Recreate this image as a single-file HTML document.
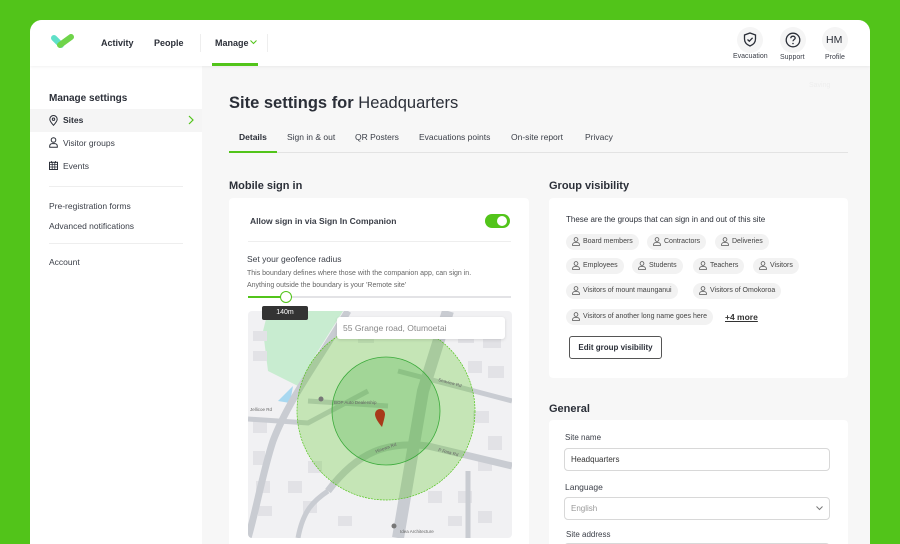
<!DOCTYPE html>
<html style="width:900px;height:544px;overflow:hidden"><head><meta charset="utf-8"><style>
*{box-sizing:border-box;margin:0;padding:0}
body{width:900px;height:544px;overflow:hidden;background:#52c41a;font-family:"Liberation Sans",sans-serif;color:#2b2f38;position:relative}
.a{position:absolute}
.card{left:30px;top:20px;width:840px;height:524px;background:#f7f7f7;border-radius:12px 12px 0 0;overflow:hidden}
.hdr{left:0;top:0;width:840px;height:46px;background:#fff;box-shadow:0 1px 3px rgba(0,0,0,.06);z-index:2}
.side{left:0;top:46px;width:172px;height:500px;background:#fff}
.nav{font-size:9px;font-weight:bold;color:#2b2f38}
.sm{font-size:8.5px;color:#3a3e47}
.panel{background:#fff;border-radius:4px}
.chip{position:absolute;height:16px;border-radius:8px;background:#f2f2f2;font-size:7px;color:#444;line-height:16px;padding-left:17px;padding-right:6px;white-space:nowrap}
.chip svg{position:absolute;left:6px;top:3px}
.inp{position:absolute;height:23px;border:1px solid #d8d8d8;border-radius:4px;background:#fff;font-size:8px;line-height:21px;padding-left:6px;color:#333}
</style></head><body>
<div class="a card">
 <div class="a hdr">
  <svg class="a" style="left:21px;top:14px" width="24" height="16" viewBox="0 0 24 16"><path d="M3 4 L10 11" stroke="#5fe0c8" stroke-width="6" stroke-linecap="round"/><path d="M9 11 L20 3" stroke="#6fd44a" stroke-width="6" stroke-linecap="round"/></svg>
  <div class="a nav" style="left:71px;top:18px">Activity</div>
  <div class="a nav" style="left:124px;top:18px">People</div>
  <div class="a" style="left:170px;top:14px;width:1px;height:18px;background:#eee"></div>
  <div class="a nav" style="left:185px;top:18px">Manage</div>
  <svg class="a" style="left:220px;top:20px" width="7" height="5"><path d="M0.5 0.5 L3.5 3.5 L6.5 0.5" stroke="#52c41a" fill="none"/></svg>
  <div class="a" style="left:237px;top:14px;width:1px;height:18px;background:#eee"></div>
  <div class="a" style="left:182px;top:43px;width:46px;height:3px;background:#52c41a"></div>
  <div class="a" style="left:707px;top:7px;width:26px;height:26px;border-radius:13px;background:#f5f5f5"></div>
  <svg class="a" style="left:713px;top:12px" width="14" height="15" viewBox="0 0 14 15"><path d="M7 1 L12.5 3 V7 C12.5 10.5 10 12.8 7 14 C4 12.8 1.5 10.5 1.5 7 V3 Z" fill="none" stroke="#2b2f38" stroke-width="1.3"/><path d="M4.5 7.5 L6.3 9.2 L9.6 5.8" fill="none" stroke="#2b2f38" stroke-width="1.3"/></svg>
  <div class="a" style="left:703px;top:33px;font-size:7px;color:#3a3e47">Evacuation</div>
  <div class="a" style="left:750px;top:7px;width:26px;height:26px;border-radius:13px;background:#f5f5f5"></div>
  <svg class="a" style="left:755px;top:12px" width="16" height="16" viewBox="0 0 16 16"><circle cx="8" cy="8" r="6.8" fill="none" stroke="#2b2f38" stroke-width="1.3"/><path d="M5.8 6.3 C5.8 4.9 6.8 4.2 8 4.2 C9.3 4.2 10.2 5 10.2 6.1 C10.2 7.5 8 7.6 8 9.3" fill="none" stroke="#2b2f38" stroke-width="1.3"/><circle cx="8" cy="11.5" r=".8" fill="#2b2f38"/></svg>
  <div class="a" style="left:750px;top:34px;font-size:7px;color:#3a3e47">Support</div>
  <div class="a" style="left:792px;top:7px;width:26px;height:26px;border-radius:13px;background:#f5f5f5"></div>
  <div class="a" style="left:796px;top:14px;font-size:10.5px;color:#2b2f38">HM</div>
  <div class="a" style="left:795px;top:34px;font-size:7px;color:#3a3e47">Profile</div>
 </div>
 <div class="a side">
  <div class="a" style="left:19px;top:27px;font-size:10px;font-weight:bold;color:#2b2f38">Manage settings</div>
  <div class="a" style="left:0;top:43px;width:172px;height:23px;background:#f5f5f5"></div>
  <svg class="a" style="left:19px;top:49px" width="9" height="11" viewBox="0 0 9 11"><path d="M4.5 10.3 C2 7.5 0.8 5.8 0.8 4.2 A3.7 3.7 0 0 1 8.2 4.2 C8.2 5.8 7 7.5 4.5 10.3Z" fill="none" stroke="#2b2f38"/><circle cx="4.5" cy="4.2" r="1.2" fill="none" stroke="#2b2f38"/></svg>
  <div class="a" style="left:33px;top:49px;font-size:8.5px;font-weight:bold">Sites</div>
  <svg class="a" style="left:158px;top:49px" width="6" height="10"><path d="M1 1 L5 5 L1 9" stroke="#52c41a" fill="none" stroke-width="1.2"/></svg>
  <svg class="a" style="left:19px;top:71px" width="9" height="11" viewBox="0 0 9 11"><circle cx="4.5" cy="3" r="2.3" fill="none" stroke="#2b2f38"/><path d="M.7 10.3 V9 A2.5 2.5 0 0 1 3.2 6.6 H5.8 A2.5 2.5 0 0 1 8.3 9 V10.3Z" fill="none" stroke="#2b2f38"/></svg>
  <div class="a sm" style="left:33px;top:72px">Visitor groups</div>
  <svg class="a" style="left:19px;top:95px" width="9" height="9" viewBox="0 0 9 9"><rect x=".5" y="1.3" width="8" height="7.2" fill="none" stroke="#2b2f38"/><path d="M.5 3.6H8.5M3.2 1.3V8.5M5.8 1.3V8.5M.5 6H8.5M2.5 0V2M6.5 0V2" stroke="#2b2f38" stroke-width=".8"/></svg>
  <div class="a sm" style="left:33px;top:95px">Events</div>
  <div class="a" style="left:19px;top:120px;width:134px;height:1px;background:#eee"></div>
  <div class="a sm" style="left:19px;top:135px">Pre-registration forms</div>
  <div class="a sm" style="left:19px;top:155px">Advanced notifications</div>
  <div class="a" style="left:19px;top:177px;width:134px;height:1px;background:#eee"></div>
  <div class="a sm" style="left:19px;top:191px">Account</div>
 </div>
 <div class="a" style="left:779px;top:62px;font-size:7px;color:#eee">Saving</div>
 <div class="a" style="left:199px;top:74px;font-size:16.5px;color:#2b2f38"><b>Site settings for</b> Headquarters</div>
 <div class="a" style="left:199px;top:132px;width:619px;height:1px;background:#e3e3e3"></div>
 <div class="a" style="left:199px;top:131px;width:48px;height:2px;background:#52c41a"></div>
 <div class="a" style="left:209px;top:112px;font-size:8.5px;font-weight:bold">Details</div>
 <div class="a sm" style="left:257px;top:112px">Sign in &amp; out</div>
 <div class="a sm" style="left:325px;top:112px">QR Posters</div>
 <div class="a sm" style="left:389px;top:112px">Evacuations points</div>
 <div class="a sm" style="left:481px;top:112px">On-site report</div>
 <div class="a sm" style="left:555px;top:112px">Privacy</div>

 <div class="a" style="left:199px;top:160px;font-size:11px;font-weight:bold">Mobile sign in</div>
 <div class="a panel" style="left:199px;top:178px;width:300px;height:370px"></div>
 <div class="a" style="left:220px;top:196px;font-size:8.5px;font-weight:bold;color:#3a3e47">Allow sign in via Sign In Companion</div>
 <div class="a" style="left:455px;top:194px;width:25px;height:14px;border-radius:7px;background:#52c41a"></div>
 <div class="a" style="left:467px;top:196px;width:10px;height:10px;border-radius:5px;background:#fff"></div>
 <div class="a" style="left:218px;top:221px;width:263px;height:1px;background:#eee"></div>
 <div class="a" style="left:217px;top:234px;font-size:8.5px;color:#3a3e47">Set your geofence radius</div>
 <div class="a" style="left:217px;top:248px;font-size:7px;color:#666;line-height:11.5px">This boundary defines where those with the companion app, can sign in.<br>Anything outside the boundary is your 'Remote site'</div>
 <div class="a" style="left:218px;top:276px;width:263px;height:2px;background:#e3e3e6"></div>
 <div class="a" style="left:218px;top:276px;width:37px;height:2px;background:#52c41a"></div>
 <div class="a" style="left:250px;top:271px;width:12px;height:12px;border-radius:6px;background:#fff;border:1.5px solid #52c41a"></div>
 <svg class="a" style="left:218px;top:291px" width="264" height="227" viewBox="0 0 264 227">
  <defs><clipPath id="c"><rect width="264" height="227" rx="4"/></clipPath></defs>
  <g clip-path="url(#c)">
  <rect width="264" height="227" fill="#f1f1f3"/>
  <path d="M20 0 L95 0 L70 40 L50 75 L20 60 L15 20Z" fill="#c8ecd0"/>
  <path d="M30 90 L45 75 L42 92Z" fill="#a8d8f0"/>
  <g fill="#e2e2e6">
   <rect x="5" y="20" width="14" height="10"/><rect x="5" y="40" width="14" height="10"/><rect x="5" y="110" width="14" height="12"/><rect x="5" y="140" width="12" height="14"/><rect x="8" y="170" width="14" height="12"/><rect x="10" y="195" width="14" height="10"/>
   <rect x="110" y="20" width="16" height="12"/><rect x="140" y="15" width="14" height="10"/><rect x="210" y="20" width="16" height="12"/><rect x="235" y="25" width="18" height="12"/><rect x="220" y="50" width="14" height="12"/><rect x="240" y="55" width="16" height="12"/>
   <rect x="60" y="150" width="14" height="12"/><rect x="40" y="170" width="14" height="12"/><rect x="55" y="190" width="14" height="12"/><rect x="90" y="205" width="14" height="10"/>
   <rect x="180" y="180" width="14" height="12"/><rect x="210" y="180" width="14" height="12"/><rect x="200" y="205" width="14" height="10"/><rect x="230" y="200" width="14" height="12"/>
   <rect x="225" y="100" width="16" height="12"/><rect x="240" y="125" width="14" height="14"/><rect x="230" y="150" width="14" height="10"/>
  </g>
  <g stroke="#c9ccd2" fill="none">
   <path d="M100 0 C70 50 40 90 25 130 C15 160 8 200 0 227" stroke-width="7"/>
   <path d="M0 108 L60 112 L120 80" stroke-width="5"/>
   <path d="M200 0 L175 80 L150 227" stroke-width="12"/>
   <path d="M80 180 C110 140 140 130 180 135 L264 155" stroke-width="7"/>
   <path d="M50 227 C55 200 65 190 80 180" stroke-width="5"/>
   <path d="M150 60 L264 90" stroke-width="5"/>
   <path d="M60 90 L140 95" stroke-width="5"/>
   <path d="M220 160 L220 227" stroke-width="5"/>
  </g>
  <circle cx="138" cy="100" r="89" fill="rgba(82,196,26,.28)" stroke="#52c41a" stroke-width=".7" stroke-dasharray="2 1"/>
  <circle cx="138" cy="100" r="54" fill="rgba(60,170,60,.25)" stroke="#3aaa3a" stroke-width=".8"/>
  <path d="M136 124 C130 117 129 113 129 111 A5 5 0 0 1 139 111 C139 113 138 117 136 124Z" transform="translate(-2,-8)" fill="#a83a1a"/>
  <g font-size="4.5" fill="#666" font-family="Liberation Sans">
   <text x="86" y="93">BOP Auto Dealership</text><text x="152" y="222">Idea Architecture</text><text x="2" y="100">Jellicoe Rd</text>
   <text x="128" y="142" transform="rotate(-20 128 142)">Hinewa Rd</text><text x="190" y="140" transform="rotate(15 190 140)">P Rata Rd</text>
   <text x="190" y="70" transform="rotate(15 190 70)">Seaview Rd</text>
  </g>
  <circle cx="73" cy="88" r="2.5" fill="#777"/><circle cx="146" cy="215" r="2.5" fill="#777"/>
  </g>
 </svg>
 <div class="a" style="left:232px;top:286px;width:46px;height:14px;border-radius:2px;background:#333;color:#fff;font-size:7px;text-align:center;line-height:14px;z-index:3">140m</div>
 <div class="a" style="left:307px;top:297px;width:168px;height:22px;background:#fff;border-radius:3px;box-shadow:0 1px 3px rgba(0,0,0,.12);font-size:8.5px;color:#888;line-height:22px;padding-left:6px">55 Grange road, Otumoetai</div>

 <div class="a" style="left:519px;top:160px;font-size:11px;font-weight:bold">Group visibility</div>
 <div class="a panel" style="left:519px;top:178px;width:299px;height:180px">
  <div class="a" style="left:17px;top:17px;font-size:8px;color:#2b2f38">These are the groups that can sign in and out of this site</div>
 </div>
 <div class="a" style="left:539px;top:316px;width:93px;height:23px;border:1px solid #555;border-radius:3px;background:#fff;font-size:8px;font-weight:bold;text-align:center;line-height:21px">Edit group visibility</div>

 <div class="a" style="left:519px;top:383px;font-size:11px;font-weight:bold">General</div>
 <div class="a panel" style="left:519px;top:400px;width:299px;height:150px"></div>
 <div class="a" style="left:535px;top:413px;font-size:8px;color:#3a3e47">Site name</div>
 <div class="inp" style="left:534px;top:428px;width:266px">Headquarters</div>
 <div class="a" style="left:535px;top:462px;font-size:8.5px;color:#3a3e47">Language</div>
 <div class="inp" style="left:534px;top:477px;width:266px;color:#999">English</div>
 <svg class="a" style="left:786px;top:486px" width="7" height="5"><path d="M.5 .5 L3.5 3.5 L6.5 .5" stroke="#777" fill="none"/></svg>
 <div class="a" style="left:536px;top:510px;font-size:8px;color:#3a3e47">Site address</div>
 <div class="inp" style="left:534px;top:523px;width:266px"></div>
</div>
<div class="chip" style="left:566px;top:234px"><svg width="8" height="9" viewBox="0 0 8 9"><circle cx="4" cy="2.5" r="1.9" fill="none" stroke="#555" stroke-width=".8"/><path d="M.6 8.5V7.5A2 2 0 0 1 2.6 5.6H5.4A2 2 0 0 1 7.4 7.5V8.5Z" fill="none" stroke="#555" stroke-width=".8"/></svg>Board members</div>
<div class="chip" style="left:647px;top:234px"><svg width="8" height="9" viewBox="0 0 8 9"><circle cx="4" cy="2.5" r="1.9" fill="none" stroke="#555" stroke-width=".8"/><path d="M.6 8.5V7.5A2 2 0 0 1 2.6 5.6H5.4A2 2 0 0 1 7.4 7.5V8.5Z" fill="none" stroke="#555" stroke-width=".8"/></svg>Contractors</div>
<div class="chip" style="left:715px;top:234px"><svg width="8" height="9" viewBox="0 0 8 9"><circle cx="4" cy="2.5" r="1.9" fill="none" stroke="#555" stroke-width=".8"/><path d="M.6 8.5V7.5A2 2 0 0 1 2.6 5.6H5.4A2 2 0 0 1 7.4 7.5V8.5Z" fill="none" stroke="#555" stroke-width=".8"/></svg>Deliveries</div>
<div class="chip" style="left:566px;top:258px"><svg width="8" height="9" viewBox="0 0 8 9"><circle cx="4" cy="2.5" r="1.9" fill="none" stroke="#555" stroke-width=".8"/><path d="M.6 8.5V7.5A2 2 0 0 1 2.6 5.6H5.4A2 2 0 0 1 7.4 7.5V8.5Z" fill="none" stroke="#555" stroke-width=".8"/></svg>Employees</div>
<div class="chip" style="left:632px;top:258px"><svg width="8" height="9" viewBox="0 0 8 9"><circle cx="4" cy="2.5" r="1.9" fill="none" stroke="#555" stroke-width=".8"/><path d="M.6 8.5V7.5A2 2 0 0 1 2.6 5.6H5.4A2 2 0 0 1 7.4 7.5V8.5Z" fill="none" stroke="#555" stroke-width=".8"/></svg>Students</div>
<div class="chip" style="left:693px;top:258px"><svg width="8" height="9" viewBox="0 0 8 9"><circle cx="4" cy="2.5" r="1.9" fill="none" stroke="#555" stroke-width=".8"/><path d="M.6 8.5V7.5A2 2 0 0 1 2.6 5.6H5.4A2 2 0 0 1 7.4 7.5V8.5Z" fill="none" stroke="#555" stroke-width=".8"/></svg>Teachers</div>
<div class="chip" style="left:753px;top:258px"><svg width="8" height="9" viewBox="0 0 8 9"><circle cx="4" cy="2.5" r="1.9" fill="none" stroke="#555" stroke-width=".8"/><path d="M.6 8.5V7.5A2 2 0 0 1 2.6 5.6H5.4A2 2 0 0 1 7.4 7.5V8.5Z" fill="none" stroke="#555" stroke-width=".8"/></svg>Visitors</div>
<div class="chip" style="left:566px;top:283px"><svg width="8" height="9" viewBox="0 0 8 9"><circle cx="4" cy="2.5" r="1.9" fill="none" stroke="#555" stroke-width=".8"/><path d="M.6 8.5V7.5A2 2 0 0 1 2.6 5.6H5.4A2 2 0 0 1 7.4 7.5V8.5Z" fill="none" stroke="#555" stroke-width=".8"/></svg>Visitors of mount maunganui</div>
<div class="chip" style="left:693px;top:283px"><svg width="8" height="9" viewBox="0 0 8 9"><circle cx="4" cy="2.5" r="1.9" fill="none" stroke="#555" stroke-width=".8"/><path d="M.6 8.5V7.5A2 2 0 0 1 2.6 5.6H5.4A2 2 0 0 1 7.4 7.5V8.5Z" fill="none" stroke="#555" stroke-width=".8"/></svg>Visitors of Omokoroa</div>
<div class="chip" style="left:566px;top:309px"><svg width="8" height="9" viewBox="0 0 8 9"><circle cx="4" cy="2.5" r="1.9" fill="none" stroke="#555" stroke-width=".8"/><path d="M.6 8.5V7.5A2 2 0 0 1 2.6 5.6H5.4A2 2 0 0 1 7.4 7.5V8.5Z" fill="none" stroke="#555" stroke-width=".8"/></svg>Visitors of another long name goes here</div>
<div class="a" style="left:725px;top:312px;font-size:8.5px;font-weight:bold;color:#333;text-decoration:underline">+4 more</div>
</body></html>
